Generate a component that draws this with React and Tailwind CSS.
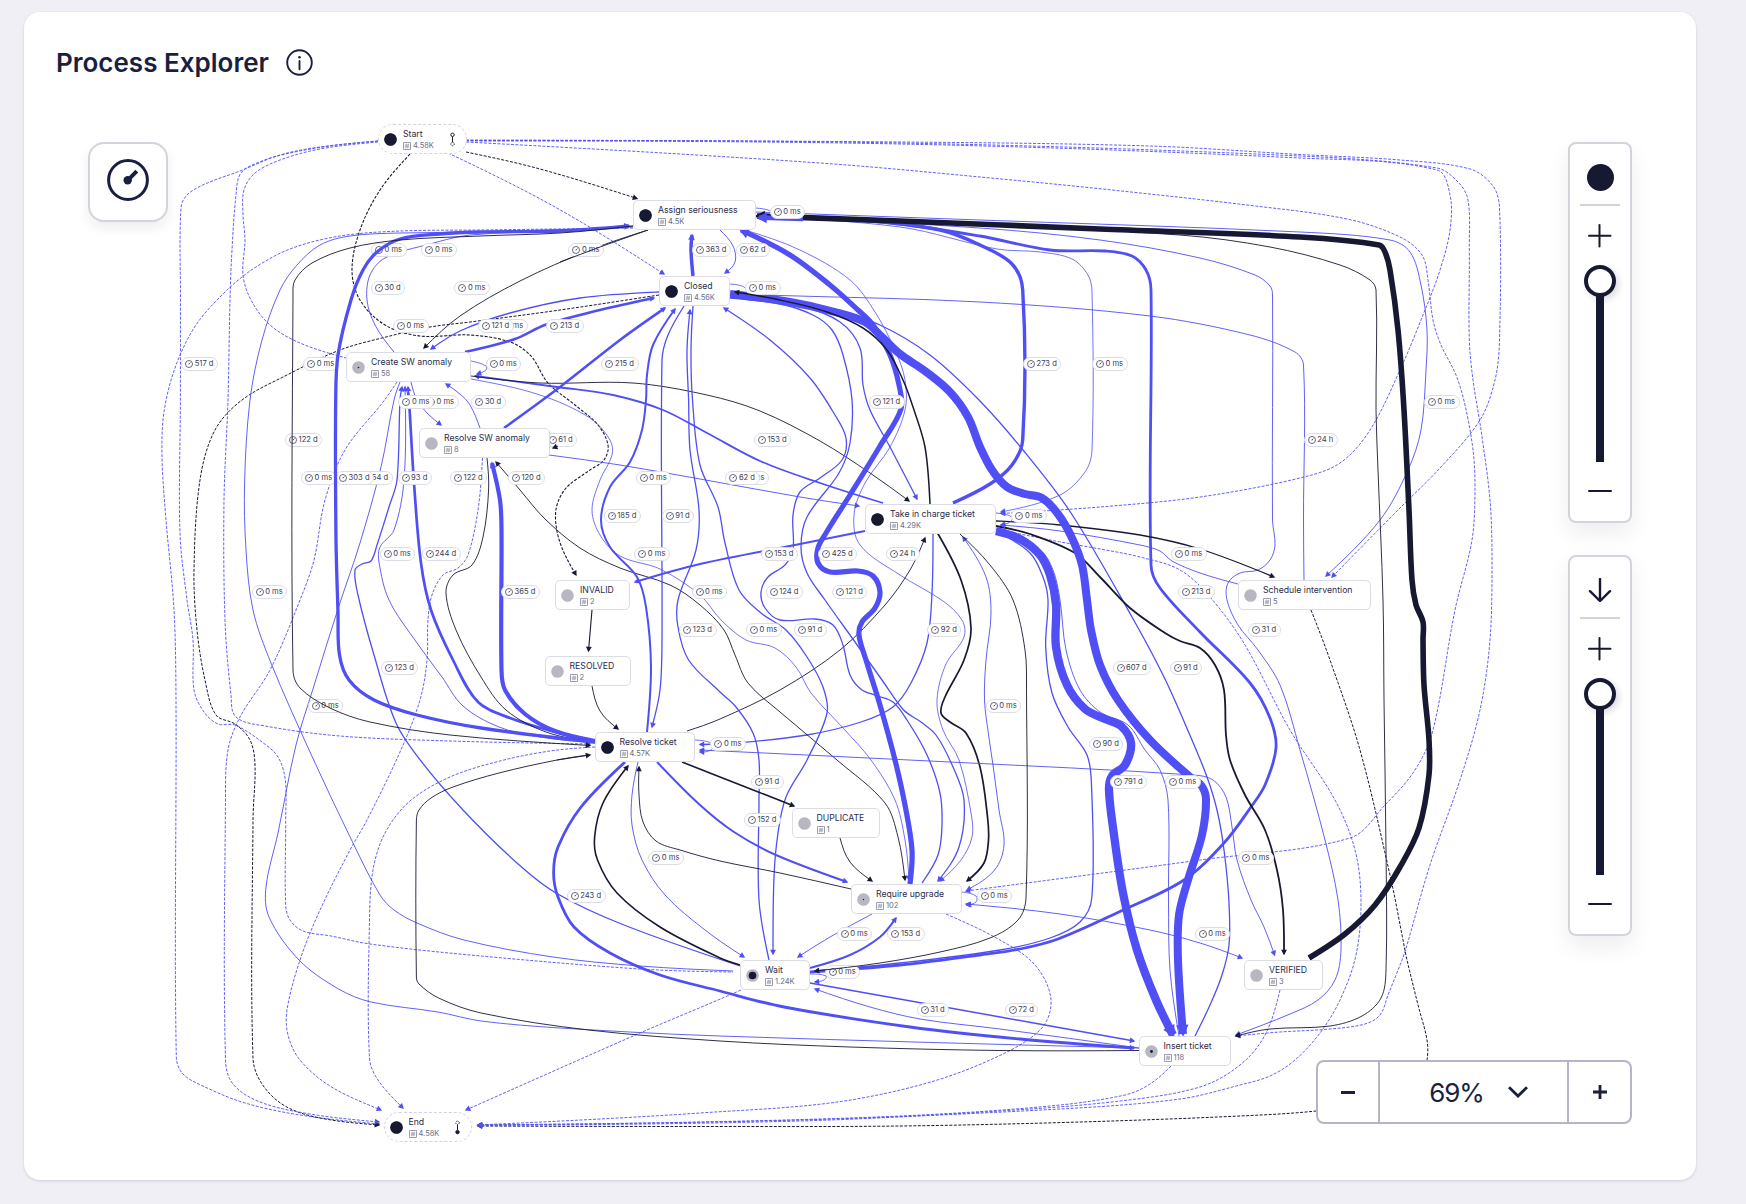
import React from "react";

const BLUE = "#4f4ff5";
const INK = "#171933";

/* Smooth curve through a list of "x,y" points. */
function curve(str) {
  const p = str.split(" ").map((s) => s.split(",").map(Number));
  const n = p.length;
  if (n === 2) return `M${p[0]}L${p[1]}`;
  const tan = p.map((_, i) => {
    if (i === 0 || i === n - 1) return null;
    const dx = p[i + 1][0] - p[i - 1][0];
    const dy = p[i + 1][1] - p[i - 1][1];
    const l = Math.hypot(dx, dy) || 1;
    return [dx / l, dy / l];
  });
  let d = `M${p[0]}`;
  for (let i = 0; i < n - 1; i++) {
    const a = p[i];
    const b = p[i + 1];
    const k = Math.hypot(b[0] - a[0], b[1] - a[1]) / 3;
    let c1 = tan[i] && [a[0] + tan[i][0] * k, a[1] + tan[i][1] * k];
    let c2 = tan[i + 1] && [b[0] - tan[i + 1][0] * k, b[1] - tan[i + 1][1] * k];
    if (!c1) c1 = [(a[0] + c2[0]) / 2, (a[1] + c2[1]) / 2];
    if (!c2) c2 = [(b[0] + c1[0]) / 2, (b[1] + c1[1]) / 2];
    d += `C${[...c1, ...c2, ...b].map((v) => v.toFixed(1)).join(" ")}`;
  }
  return d;
}

/* [kind, width, points]; kind: b = blue, k = ink, d = dashed, e = end arrow, s = start arrow */
const LOWER = [
  ["bd", 0.9, "378,141 320,147 280,155 240,171 205,184 187,195 181,208 180.5,300 180.4,400 180,533 187,600 193,640 194,690 204,712 218,724 235,725 262,742 278,757 285.3,780 285.7,820 285.7,905 290,920 303,931 331,936 370,944 470,955 640,969 733,972"],
  ["bde", 0.9, "378,141 330,146 290,153 262,161 241,173 236,195 232,250 230,300 228,400 224,500 225,620 231,695 236,717 265,726 340,736 450,741 590,744"],
  ["bd", 0.9, "378,142 320,149 280,160 255,173 244,190 243,215 245,240 243,275 251,300 270,325 300,343 346,358"],
  ["bde", 0.9, "633,228 480,230 400,231 340,236 290,249 250,271 219,298 194,328 175,368 164,412 162,457 166,520 174,610 176,700 176.3,1057 183,1074 205,1087 245,1103 300,1115 379,1124"],
  ["kde", 1, "659,295 560,310 470,322 430,327 390,336 340,350 285,376 242,400 215,430 200,480 194,570 197,630 205,680 216,715 235,724 250,740 255,765 253,820 253,1058 262,1084 285,1106 320,1118 379,1125"],
  ["bde", 0.9, "397,382 383,402 345,450 325,500 314,560 300,600 270,670 240,717 228,750 225.5,800 225.5,1060 233,1084 260,1102 310,1114 379,1122"],
  ["bde", 0.9, "482.5,458 478,510 468,555 458,568 443,575 432,595 428,620 427,660 420,700 400,752 367,820 350,850 320,910 300,960 287,1010 288,1035 300,1060 330,1086 381,1110"],
  ["bde", 0.9, "595,747 550,751 500,761 450,777 410,801 385,833 373,870 369.5,920 369.5,1058 378,1080 403,1108"],
  ["bde", 0.9, "741,990 718,1000 640,1033 466,1110"],
  ["kde", 1, "466,152 540,169 637,198.5"],
  ["bde", 0.9, "448,153 555,207 664,274"],
  ["kde", 1.1, "410,154 380,190 360,230 352,270 360,300 385,325 420,336 470,335 510,342 531,356 548,383 575,405 598,425 608,445 604,460 590,470 567,487 557,505 556,525 562,548 576,575"],
  ["bde", 0.9, "466,140 900,142 1150,146 1300,154.5 1400,160 1470,169 1493,186 1499.5,208 1499.5,340 1495,380 1480,420 1440,468 1400,508 1332,577"],
  ["bde", 0.9, "466,140.5 900,143 1300,156 1437,168 1458,182 1468,200 1469.3,250 1469.3,340 1473,380 1481,430 1490,500 1492,560 1490,640 1480,710 1460,780 1430,865 1407,945 1402,960 1388,995 1380,1015 1365,1024 1330,1029 1280,1032 1236,1036"],
  ["bde", 0.9, "466,141 900,144 1300,158 1437,170 1450,195 1450,230 1440,270 1425,310 1400,370 1370,430 1340,463 1300,478 1200,497 1100,507 1001,513.5"],
  ["bde", 0.9, "466,142 820,163 1012,180 1112,190 1247,205 1347,219 1400,237 1422,255 1428,280 1433,320 1441,345 1456,375 1465,405 1473,450 1475,490 1472,540 1455,610 1433,730 1415,770 1385,805 1350,838 1200,860 1080,876 966,891"],
  ["kde", 1, "1311,610 1330,660 1360,750 1390,875 1403,940 1407,960 1418,1005 1427,1040 1427,1060 1420,1080 1390,1100 1316,1111 1240,1116 1080,1122 900,1126 700,1126.5 478,1126"],
  ["bde", 0.9, "996,529 1050,540 1100,549 1140,557 1180,570 1210,597 1245,645 1290,730 1335,800 1355,850 1361,900 1356,955 1340,1000 1320,1033 1295,1060 1270,1076 1240,1085 1180,1099 1060,1109 800,1120 478,1125"],
  ["bde", 0.9, "1280,990 1265,1035 1240,1065 1200,1087 1120,1101 1000,1111 800,1121 478,1125.5"],
  ["bde", 0.9, "1171,1066 1150,1084 1125,1095 1050,1106 900,1116 700,1122 478,1125"],
  ["bde", 0.9, "946,914 1000,940 1035,965 1051,1000 1040,1030 990,1060 920,1085 830,1103 700,1113 600,1119 478,1125"],
  ["be", 0.9, "756,212 980,220 1300,232 1390,240 1410,252 1421,285 1427,330 1426,370 1421,430 1408,470 1380,520 1326,576"],
  ["be", 0.9, "756,216 980,228 1100,240 1200,258 1255,275 1270,286 1272.5,295 1272.5,520 1275,545 1270,560 1258,570 1240,573 1228,583 1227,600 1238,625 1258,650 1280,685 1300,750 1325,840 1338,900 1341,950 1335,980 1318,1000 1290,1014 1236,1035"],
  ["b", 0.9, "1304,580 1303.5,520 1303.5,365 1295,352 1250,335 1150,316 980,302 780,295.5 730,294"],
  ["be", 0.8, "756,217 900,227 997,249 1040,252 1072,259 1088,275 1092,292 1092,450 1085,472 1060,495 1001,512"],
  ["be", 0.8, "745,230 800,250 850,280 875,312 895,350 905,380 905,410 890,447 865,483 854,515 860,545 900,575 943,601 962,620 964,637 946,664 937,700 943,730 959,760 971,813 972,837 961,860 940,881"],
  ["be", 3.4, "953,503 990,484 1012,465 1022.7,440 1022.7,290 1012,264 980,245 940,230 860,220 762,217"],
  ["be", 2.8, "810,972 900,965 980,955 1020,949 1058,939 1121,911 1184,880 1224,843 1251,807 1265,785 1276,748 1270,718 1250,683 1200,632 1160,588 1151,565 1151,290 1146,270 1132,256 1105,251 1050,250 980,236 880,222 762,217"],
  ["be", 1.3, "996,531 1030,553 1043,577 1048,600 1045.7,647 1052,693 1068,727 1087,755 1091.5,785 1091.8,898 1080,922 1050,938 1000,950 900,963 815,971"],
  ["b", 0.9, "996,530 1040,550 1053,570 1060,600 1066,650 1080,690 1100,712 1128,725 1145,750 1160,770 1168,800 1168.5,900 1170,970 1179,1036"],
  ["b", 1.3, "730,295 840,313 880,325 930,355 979,400 1023,450 1071,513 1132,617 1164,677 1189,733 1207,777 1217,810 1224,850 1229,903 1229,945 1222,975 1210,1005 1195,1036"],
  ["ke", 1.3, "996,521 1060,525 1140,535 1200,549 1274,577"],
  ["ke", 1.8, "996,526 1030,534 1075,553 1100,577 1130,608 1165,633 1180,641 1200,648 1215,665 1224,690 1226,735 1230,760 1245,795 1265,830 1277,870 1283,910 1284,954"],
  ["be", 0.9, "1238,584 1200,573 1172,561 1160,551 1140,545 1060,531 1001,525"],
  ["ke", 1.7, "937.5,533 961,580 971,628 964,660 945,697 941,713 950,722 966,733 980,767 987.5,817 988.5,840 984,863 967,881"],
  ["bes", 0.9, "963,537 986,577 991,613 986,660 984.5,700 988.6,735 993,765 999,810 1004,845 994.6,870 967,890"],
  ["be", 1.3, "933,533 932,593 927,643 911,683 893,707 861,722 807,735 736,743 700,744.5"],
  ["ke", 0.9, "687,731 720,719 780,690 840,650 885,605 910,570 925,538"],
  ["kse", 0.9, "496,462 520,490 545,519 580,548 620,568 670,585 700,605 724,630 735,655 748,683 780,712 837,760 885,803 898,837 905,880"],
  ["be", 0.8, "471,379 540,395 590,418 610,440 612,455 600,480 592,510 600,535 620,556 660,569 700,595 721,620 746,640 775,648 796,667 811,693 843,728 871,760 895,800 905,840 909,880"],
  ["be", 0.9, "549,455 620,465 700,479 800,497 859,506"],
  ["be", 1.8, "883,503 820,483 760,461 707,433 663,410 613,395 557,387 475,376"],
  ["ke", 0.9, "471,376 540,383 633,383 707,395 760,411 820,441 870,473 909,501"],
  ["be", 1.9, "865,531 800,544 700,564 635,582"],
  ["be", 2.5, "465,352 515,339 545,325 600,310 654,298"],
  ["be", 1.3, "659,292 580,298 510,313 460,331 431,349"],
  ["b", 0.9, "394,352 375,325 367,300 370,275 385,258 430,244 470,235 560,231 633,226"],
  ["be", 3.5, "693,276 691,250 692,235"],
  ["be", 0.9, "720,230 733,246 735,262 725,273"],
  ["be", 2.5, "504,428 560,387 620,340 665,308"],
  ["be", 2, "647,732 651,667 646,607 637,577 610,547 601,520 610,487 630,462 642,430 646,400 647,375 653,345 675,309"],
  ["be", 1.3, "684,306 668,335 662,360 662,640 660,690 652,727"],
  ["bs", 1.3, "690,310 687,350 688.6,400 690,450 699,510 696,550 678,600 678,627 688.6,660 720,692 736,707 753,733 759,760 759,800 759,900 769,960"],
  ["be", 1.3, "693,306 691,350 692.5,400 700,465 718,507 725,543 739,590 761,613 786,630 807,657 823,687 827,713 807,760 786,797 778,833 774,877 773,954"],
  ["bs", 1.3, "724,308 770,340 810,378 835,415 846,438 842,460 820,478 800,492 793,515 793,550 785,565 768,577 761,592 765,608 780,620 815,619 833,625 843,645 850,675 862,690 878,696 893,702 907,720 927,755 940,793 942,825 938,855 922,883"],
  ["be", 1.3, "730,298 780,304 813,315 832,330 843,355 852,400 850,443 839,473 807,517 801,547 807,573 825,600 853.6,640 882,680 903.6,710 921,722 936,735 953,767 964,800 959,847 938,881"],
  ["be", 1.3, "730,296 800,306 840,322 860,348 863,385 870,410 890,447 917,499"],
  ["ke", 0.9, "648,230 590,250 520,281 460,316 424,348"],
  ["b", 0.9, "633,227 480,232 400,233 350,236 320,245 297,265 280,290 262,340 250,400 244.6,483 246,550 253,610 271,663 310,752 353,843 380,895 394,910 417,923 464,940 553,957 640,966 733,971"],
  ["b", 0.9, "400,382 394,400 381,467 360,543 338.6,607 313.6,687 296,745 278,833 266,887 269,917 299,960 338.6,989 371,1002 438,1012 481,1021 560,1028 720,1036 1139,1048"],
  ["be", 1.3, "740,966 624,925 556,893 517,863 463,810 421,761 396,723 374,655 358,595 355,570 362,564 371,561 377,545 389,507 397,480 400,400 402,387"],
  ["be", 0.9, "595,743 540,737 499,727 463,706 442,677 417,643 389,600 379,562 380,547 394,530 404,480 405,387"],
  ["b", 2.7, "595,742 555,732 510,718 478,702 453,660 431,610 421,563 414,483 409,400 408,392"],
  ["be", 1.3, "409,400 408,387"],
  ["be", 0.9, "411,382 417,400 428,414 441,425"],
  ["be", 0.9, "480,428 470,405 460,394 446,384"],
  ["k", 0.9, "487,458 488.6,490 483,537 472,565 453,575 446,593 456,630 481,677 506,710 546,732 595,742"],
  ["be", 4.2, "595,741 555,731 525,714 505,690 501.5,670 501.5,530 500,500 492,463"],
  ["ke", 1.1, "592,610 588.5,651"],
  ["ke", 0.9, "592,686 600,711 618,729"],
  ["bes", 0.9, "700,750 950,762 1193,775 1213,780 1226,797 1232,827 1237,860 1251,900 1264,927 1274.6,955"],
  ["be", 2, "657,762 700,805 734,832 776,855 847,882"],
  ["ke", 1.6, "682,762 720,777 794,806"],
  ["ke", 0.9, "840,838 850,862 872,881"],
  ["ke", 0.9, "851,889 780,873 720,861 680,850 656,841 643,822 639,795 639,767"],
  ["ke", 1.6, "740,965 720,958 660,927 617,893 597.5,860 594.6,837 603,803 628,766"],
  ["be", 2.8, "625,762 581,807 558,847 553.6,873 558,897 574,927 610,953 660,975 720,991 784,1007 910,1027 1020,1039 1134,1048"],
  ["be", 0.9, "638,762 632,795 632,825 642,860 665,895 705,930 744,957"],
  ["be", 0.9, "872,914 830,937 798,957"],
  ["be", 2, "810,968 850,955 880,937 896,918"],
  ["be", 1.5, "810,983 950,1008 1134,1041"],
  ["be", 0.9, "1139,1048 1000,1029 920,1019 870,1007 815,989"],
  ["bse", 0.9, "966,904 1060,914 1150,930 1200,943 1242,958"],
  ["b", 0.8, "756,208 768,210 772,213"],
  ["b", 0.8, "730,284 742,286 747,290"],
  ["be", 0.8, "471,361 486,366 486,370 477,374"],
  ["be", 0.8, "695,740 713,744 711,750 700,752"],
  ["be", 0.8, "996,513 1012,517 1010,522 1001,525"],
  ["be", 0.8, "962,892 976,896 976,902 967,905"],
  ["be", 0.8, "810,974 826,976 824,980 815,982"],
  ["be", 5.2, "910,884 912,850 905,805 895,760 880,705 866,660 859,635 862,622 875,608 880,592 873,576 858,571 830,572 818,563 818,548 826,533 850,495 880,446 901,409 899,385 890,355 873,325 858,310 830,285 790,255 741,230"],
  ["be", 8, "730,294 790,302 835,312 865,322 882,337 900,354 925,371 950,392 968,417 980,447 992,470 1007,487 1025,494 1042,498 1058,514 1072,538 1082,565 1087,600 1091,630 1100,665 1118,700 1150,740 1190,777 1201,785 1206,799 1202,835 1188,880 1179,915 1178,960 1183,1034"],
  ["be", 8.3, "996,531 1020,539 1040,555 1050,575 1056,605 1056,647 1067,685 1085,709 1105,719 1121,726 1131,743 1125,765 1112,776 1109,790 1114,835 1123,893 1137,950 1156,1000 1173,1035"],
  ["ke", 5.6, "1309,958 1345,934 1375,905 1400,867 1419,828 1429,775 1429,740 1424,685 1423,640 1423,622 1416,605 1412,580 1409,510 1404,410 1398,330 1390,270 1385,252 1379,245 1300,237 1100,229 900,221 757,216"],
  ["be", 4.6, "803,219 759,217.5"],
];

/* Edges that run above the duration pills. */
const UPPER = [
  ["k", 0.9, "648,230 600,247 560,262"],
  ["be", 3.3, "595,742 481,728 417,715 374,700 349,680 339.5,655 338,613 336,540 335.7,400 338,355 351,300 363,270 377,252 400,239 440,234 480,232 560,231 629,226"],
  ["ke", 0.9, "633,226 560,233 480,236 400,240 350,248 312,263 295,280 293,295 293,670 300,688 330,708 370,722 450,735 590,745.5"],
  ["ke", 0.9, "990,226 1180,235 1270,247 1340,265 1370,280 1376,290 1376,410 1378,470 1383,600 1384,700 1386,850 1386,970 1381,998 1362,1016 1330,1026 1270,1029 1236,1036"],
  ["k", 0.9, "1139,1050.5 1000,1050.5 850,1047 720,1041 588.6,1030 481,1013 438.6,998 419,984 416.4,977 416.4,820 419,810 431,798 453,787 499,773 557,760 588,755"],
  ["ke", 0.9, "557,760 590,755"],
  ["ke", 0.9, "960,534 990,565 1013,600 1025,650 1026.5,690 1026,898 1018,920 990,938 940,952 880,963 815,971"],
  ["ke", 1.5, "930,504 925,447 913,407 903,380 887,350 863,328 827,312 780,300 735,292"],
  ["ke", 0.9, "558,446 553,448"],
];

/* [left, centre y, text] */
const LABELS = [
  [770, 212, "0 ms"], [371.3, 250, "0 ms"], [421.7, 250, "0 ms"], [568.7, 250, "0 ms"], [692.3, 250, "363 d"], [736.3, 250, "62 d"],
  [371.3, 288, "30 d"], [454.7, 288, "0 ms"], [745.3, 288, "0 ms"],
  [393.3, 326, "0 ms"], [492.5, 326, "0 ms"], [478.3, 326, "121 d"], [546.7, 326, "213 d"],
  [181.5, 364, "517 d"], [303.5, 364, "0 ms"], [486, 364, "0 ms"], [601.7, 364, "215 d"], [1023.3, 364, "273 d"], [1092.3, 364, "0 ms"],
  [423.3, 402, "0 ms"], [398.7, 402, "0 ms"], [471.7, 402, "30 d"], [869.3, 402, "121 d"], [1424.3, 402, "0 ms"],
  [285.4, 440, "122 d"], [545, 440, "61 d"], [754.3, 440, "153 d"], [1304, 440, "24 h"],
  [301.4, 478, "0 ms"], [355.5, 478, "154 d"], [335.4, 478, "303 d"], [397.9, 478, "93 d"], [450.4, 478, "122 d"], [508.2, 478, "120 d"], [636, 478, "0 ms"], [733.7, 478, "0 ms"], [725.7, 478, "62 d"],
  [604, 516, "185 d"], [662, 516, "91 d"], [1011.7, 516, "0 ms"],
  [380, 554, "0 ms"], [421.8, 554, "244 d"], [634.6, 554, "0 ms"], [761, 554, "153 d"], [818.6, 554, "425 d"], [886, 554, "24 h"], [1171.4, 554, "0 ms"],
  [252, 592, "0 ms"], [501.4, 592, "365 d"], [691.8, 592, "0 ms"], [766, 592, "124 d"], [832, 592, "121 d"], [1178, 592, "213 d"],
  [679.6, 630, "123 d"], [746.4, 630, "0 ms"], [794.3, 630, "91 d"], [927.5, 630, "92 d"], [1248.3, 630, "31 d"],
  [381.4, 668, "123 d"], [1112.9, 668, "607 d"], [1170, 668, "91 d"],
  [308, 706, "0 ms"], [986, 706, "0 ms"],
  [710.7, 744, "0 ms"], [1089.3, 744, "90 d"],
  [751.4, 782, "91 d"], [1110.7, 782, "791 d"], [1165.4, 782, "0 ms"],
  [744.2, 820, "152 d"],
  [648.6, 858, "0 ms"], [1238.7, 858, "0 ms"],
  [567, 896, "243 d"], [977, 896, "0 ms"],
  [837, 934, "0 ms"], [887.7, 934, "153 d"], [1195, 934, "0 ms"],
  [825, 972, "0 ms"], [917, 1010, "31 d"], [1005, 1010, "72 d"],
];

/* [left, top, width, name, count, radius of the inner dot] */
const NODES = [
  [633, 200, 123, "Assign seriousness", "4.5K", 6],
  [659, 276, 71, "Closed", "4.56K", 6],
  [346, 352, 125, "Create SW anomaly", "58", 0.8],
  [419, 428, 131, "Resolve SW anomaly", "8", 0],
  [865, 504, 131, "Take in charge ticket", "4.29K", 6],
  [1238, 580, 133, "Schedule intervention", "5", 0],
  [555, 580, 75, "INVALID", "2", 0],
  [544.5, 656, 86, "RESOLVED", "2", 0],
  [594.5, 732, 100.5, "Resolve ticket", "4.57K", 6],
  [791.5, 808, 88.5, "DUPLICATE", "1", 0],
  [851, 884, 111, "Require upgrade", "102", 0.7],
  [740, 960, 70, "Wait", "1.24K", 3.8],
  [1244, 960, 78.5, "VERIFIED", "3", 0],
  [1138.5, 1036, 92.5, "Insert ticket", "118", 1.4],
];

const TERMINALS = [
  [378, 124, 89, "Start", "4.58K"],
  [383.5, 1112, 88.5, "End", "4.58K"],
];

function Head({ id, color, size }) {
  return (
    <marker id={id} markerUnits="userSpaceOnUse" markerWidth={size} markerHeight={size} refX="7.5" refY="5" viewBox="0 0 10 10" orient="auto-start-reverse">
      <path d="M1 0.5 9.5 5 1 9.5Z" fill={color} />
    </marker>
  );
}

function Edges({ edges }) {
  return (
    <svg className="pointer-events-none absolute inset-0" width="1746" height="1204" viewBox="0 0 1746 1204" fill="none">
      {edges.map(([kind, w, pts], i) => {
        const hue = kind[0];
        const size = w > 6 ? "xl" : w > 4.5 ? "l" : w > 2.9 ? "m" : "s";
        const mark = `url(#${hue}-${size})`;
        return (
          <path
            key={i}
            d={curve(pts)}
            stroke={hue === "k" ? INK : BLUE}
            strokeWidth={w}
            strokeDasharray={kind.includes("d") ? "3 1.5" : undefined}
            markerEnd={kind.includes("e") ? mark : undefined}
            markerStart={kind.includes("s") ? mark : undefined}
          />
        );
      })}
    </svg>
  );
}

function Gauge({ className, stroke = 1.6 }) {
  return (
    <svg className={className} viewBox="0 0 20 20" fill="none" stroke="currentColor" strokeWidth={stroke}>
      <circle cx="10" cy="10" r="8.8" />
      <path d="M9.8 10.2 13.6 6.3" strokeWidth={stroke * 1.1} />
      <circle cx="9.8" cy="10.2" r="1.2" fill="currentColor" stroke="none" />
    </svg>
  );
}

function Pill({ x, y, text }) {
  return (
    <div
      className="absolute flex h-[14px] -translate-y-1/2 items-center gap-[1.5px] rounded-full border border-[#dcdce4] bg-white pr-[3.5px] pl-[3px] text-[7.6px] leading-none whitespace-nowrap text-[#3a3c56]"
      style={{ left: x - 0.3, top: y }}
    >
      <Gauge className="size-[8px]" stroke={1.9} />
      {text}
    </div>
  );
}

function Caption({ name, count }) {
  return (
    <div className="flex flex-col gap-[2.5px] pt-[2px]">
      <span className="text-[8.7px] leading-[9.5px] whitespace-nowrap text-[#2b2d4b]">{name}</span>
      <span className="flex items-center gap-[2px] text-[7.5px] leading-[8px] text-[#6c6d82]">
        <svg className="size-[8px]" viewBox="0 0 8 8" fill="none" stroke="currentColor" strokeWidth="0.75">
          <rect x="0.4" y="0.4" width="7.2" height="7.2" rx="0.7" />
          <path d="M3.4 1.7 2.8 6.3M5.3 1.7 4.7 6.3M1.8 3.1H6.3M1.7 4.9H6.2" strokeWidth="0.5" />
        </svg>
        {count}
      </span>
    </div>
  );
}

function Dot({ fill }) {
  return (
    <svg className="size-[13px] shrink-0" viewBox="0 0 13 13">
      <circle cx="6.5" cy="6.5" r="6.3" fill={fill === 6 ? INK : "#b7b7c1"} />
      {fill > 0 && <circle cx="6.5" cy="6.5" r={fill} fill={INK} />}
    </svg>
  );
}

function Node({ x, y, w, name, count, fill }) {
  return (
    <div className="absolute flex h-[30px] items-center gap-[6px] rounded-[5px] border border-[#dcdce4] bg-white pl-[5px]" style={{ left: x, top: y, width: w }}>
      <Dot fill={fill} />
      <Caption name={name} count={count} />
    </div>
  );
}

function Terminal({ x, y, w, name, count }) {
  const end = name === "End";
  return (
    <div className="absolute flex h-[30px] items-center gap-[6px] rounded-full border border-dashed border-[#d3d3dc] bg-white pr-[10.5px] pl-[5px]" style={{ left: x, top: y, width: w }}>
      <Dot fill={6} />
      <Caption name={name} count={count} />
      <svg className="ml-auto h-[15px] w-[7px]" viewBox="0 0 7 15" fill="none" stroke={INK}>
        <circle cx="3.5" cy="2.8" r="1.7" strokeDasharray={end ? "1 0.8" : undefined} />
        <path d="M3.5 4.8V10.2" />
        <circle cx="3.5" cy="12.1" r="1.7" fill={end ? INK : "none"} strokeDasharray={end ? undefined : "1 0.8"} />
      </svg>
    </div>
  );
}

function Slider({ children }) {
  return (
    <div className="flex h-[381px] w-[64px] flex-col items-center rounded-lg border-2 border-[#d4d3dc] bg-white shadow-[0_10px_22px_rgba(23,25,51,0.08)]">
      <div className="flex h-[62px] w-10 items-center justify-center border-b-2 border-[#d4d3dc] pt-1.5">{children}</div>
      <svg className="mt-[18px] size-6" viewBox="0 0 24 24" stroke={INK} strokeWidth="2" strokeLinecap="round">
        <path d="M11.5 1V22.5M1 11.7H22.5" />
      </svg>
      <div className="mt-[17px] size-8 rounded-full border-4 border-[#171933] bg-white shadow-[3px_3px_6px_rgba(23,25,51,0.15)]" />
      <div className="-mt-px h-[166px] w-2 bg-[#171933]" />
      <div className="mt-[28px] h-[2px] w-6 rounded bg-[#171933]" />
    </div>
  );
}

export default function App() {
  return (
    <div className="relative h-[1204px] w-[1746px] overflow-hidden bg-[#f0eff5] px-6 pt-3 font-['Inter',sans-serif] text-[#1a1f42]">
      <main className="h-[1168px] w-[1672px] rounded-2xl bg-white shadow-[0_1px_3px_rgba(23,25,51,0.15)]">
        <header className="flex items-center gap-[17.5px] pt-[34.5px] pl-8">
          <h1 className="text-[26px] leading-8 font-semibold">Process Explorer</h1>
          <svg className="-mt-px size-[27px]" viewBox="0 0 27 27" fill="none" stroke="currentColor" strokeWidth="1.9">
            <circle cx="13.5" cy="13.5" r="12.3" />
            <path d="M13.5 12V20.3" strokeLinecap="round" />
            <circle cx="13.5" cy="8.2" r="1.3" fill="currentColor" stroke="none" />
          </svg>
        </header>
      </main>

      <svg className="absolute size-0">
        <defs>
          <Head id="b-s" color={BLUE} size={6.5} />
          <Head id="b-m" color={BLUE} size={7.5} />
          <Head id="b-l" color={BLUE} size={12} />
          <Head id="b-xl" color={BLUE} size={14} />
          <Head id="k-s" color={INK} size={6.5} />
          <Head id="k-m" color={INK} size={7} />
          <Head id="k-l" color={INK} size={12} />
        </defs>
      </svg>
      <Edges edges={LOWER} />
      {LABELS.map(([x, y, text]) => (
        <Pill key={`${x}-${y}`} x={x} y={y} text={text} />
      ))}
      <Edges edges={UPPER} />
      {NODES.map(([x, y, w, name, count, fill]) => (
        <Node key={name} x={x} y={y} w={w} name={name} count={count} fill={fill} />
      ))}
      {TERMINALS.map(([x, y, w, name, count]) => (
        <Terminal key={name} x={x} y={y} w={w} name={name} count={count} />
      ))}

      <button className="absolute top-[142px] left-[88px] flex size-20 items-center justify-center rounded-2xl border-2 border-[#d4d3dc] bg-white pb-1 shadow-[0_6px_12px_rgba(23,25,51,0.08)]">
        <svg className="size-[42px]" viewBox="0 0 42 42" fill="none" stroke="currentColor" strokeWidth="3">
          <circle cx="21" cy="21" r="19.4" />
          <path d="M20.7 21.3 29.8 12.2" strokeWidth="4" />
          <circle cx="20.7" cy="21.3" r="4.2" fill="currentColor" stroke="none" />
        </svg>
      </button>

      <aside className="absolute top-[142px] left-[1568px] flex flex-col gap-8">
        <Slider>
          <div className="size-[27px] rounded-full bg-[#171933]" />
        </Slider>
        <Slider>
          <svg className="size-6" viewBox="0 0 24 24" fill="none" stroke={INK} strokeWidth="2.4" strokeLinecap="round">
            <path d="M12 1V23M2 13.2 12 23 22 13.2" />
          </svg>
        </Slider>
      </aside>

      <div className="absolute top-[1060px] left-[1316px] flex h-16 w-[316px] divide-x-2 divide-[#b7b4c7] rounded-lg border-2 border-[#b7b4c7] bg-white">
        <button className="flex w-[62px] items-center justify-center">
          <span className="h-[3px] w-3.5 bg-[#1a1f42]" />
        </button>
        <button className="flex flex-1 items-center justify-center gap-[24px] pl-[10px] text-[26px] tracking-[-0.04em]">
          69%
          <svg className="h-[12px] w-5" viewBox="0 0 20 12" fill="none" stroke="currentColor" strokeWidth="2.8">
            <path d="M1 1.2 10 10 19 1.2" />
          </svg>
        </button>
        <button className="flex w-[61px] items-center justify-center">
          <svg className="size-3.5" viewBox="0 0 14 14" stroke="currentColor" strokeWidth="2.8">
            <path d="M7 0V14M0 7H14" />
          </svg>
        </button>
      </div>
    </div>
  );
}
